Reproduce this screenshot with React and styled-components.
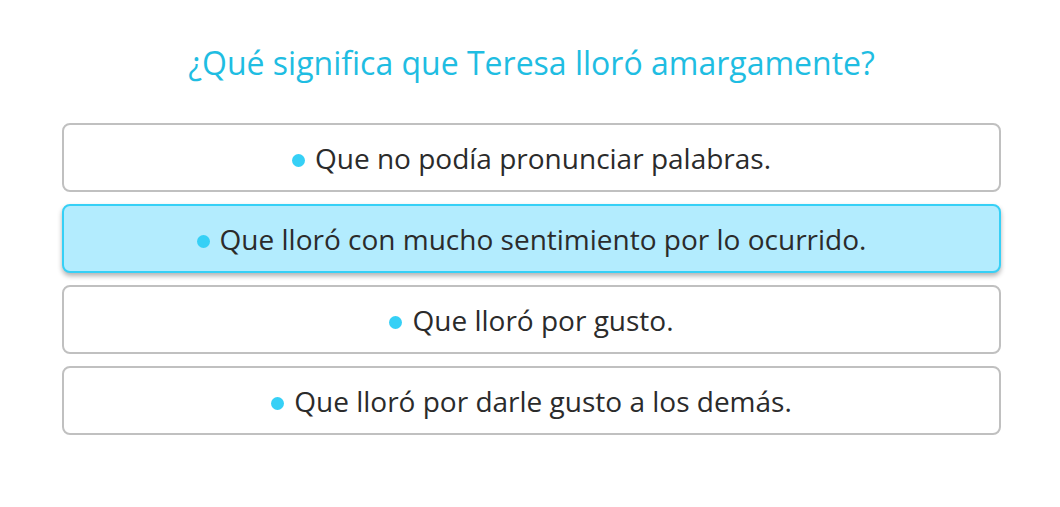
import styled, { createGlobalStyle } from "styled-components";

const GlobalStyle = createGlobalStyle`
  body {
    margin: 0;
    background: #ffffff;
    font-family: "Open Sans", "Noto Sans", sans-serif;
  }
`;

const options = [
  "Que no podía pronunciar palabras.",
  "Que lloró con mucho sentimiento por lo ocurrido.",
  "Que lloró por gusto.",
  "Que lloró por darle gusto a los demás.",
];

function App() {
  const selected = 1;

  return (
    <Page>
      <GlobalStyle />
      <Question>¿Qué significa que Teresa lloró amargamente?</Question>
      <OptionList>
        {options.map((text, i) => (
          <Option key={i} $active={i === selected}>
            <Dot />
            <span>{text}</span>
          </Option>
        ))}
      </OptionList>
    </Page>
  );
}

const Page = styled.div`
  width: 1060px;
  height: 507px;
  padding: 40px 59px 0 62px;
  box-sizing: border-box;
  display: flex;
  flex-direction: column;
  align-items: stretch;
`;

const Question = styled.h1`
  margin: 0 0 37px;
  text-align: center;
  font-size: 32px;
  font-weight: 400;
  line-height: 46px;
  color: #1fbde2;
`;

const OptionList = styled.div`
  display: flex;
  flex-direction: column;
  gap: 12px;
`;

const Option = styled.div`
  height: 69px;
  box-sizing: border-box;
  display: flex;
  align-items: center;
  justify-content: center;
  gap: 10px;
  border: 2.5px solid ${(p) => (p.$active ? "#36d0f6" : "#c0c0c0")};
  border-radius: 8px;
  background: ${(p) => (p.$active ? "#b3ecfe" : "#ffffff")};
  box-shadow: ${(p) => (p.$active ? "0 3px 5px rgba(0, 0, 0, 0.3)" : "none")};
  font-size: 28px;
  color: #2b2b2b;
`;

const Dot = styled.span`
  width: 13px;
  height: 13px;
  margin-top: 5px;
  border-radius: 50%;
  background: #36d0f6;
  flex-shrink: 0;
`;

export default App;
